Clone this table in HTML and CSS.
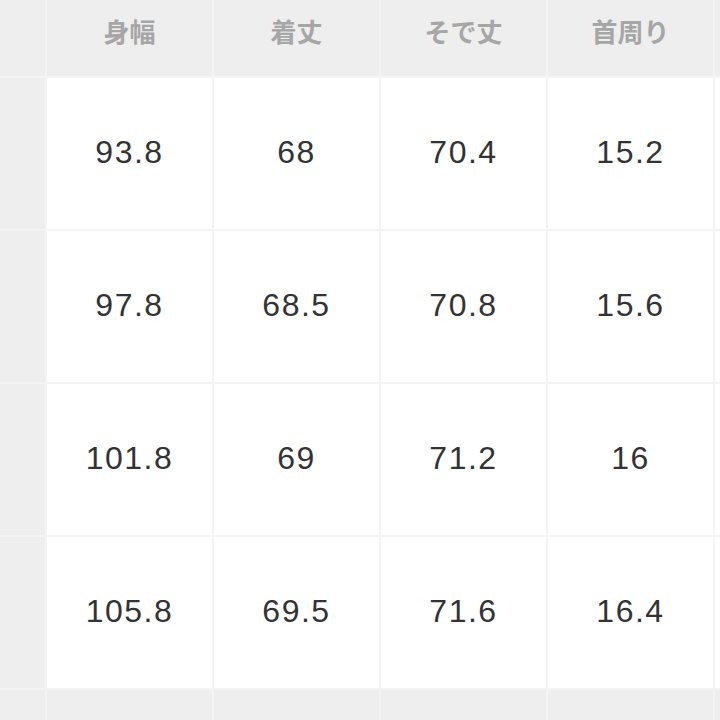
FILE: index.html
```html
<!DOCTYPE html>
<html lang="ja">
<head>
<meta charset="utf-8">
<link rel="stylesheet" href="styles.css">
</head>
<body>
<div class="table">
  <div class="cell side"></div>
  <div class="cell head">身幅</div>
  <div class="cell head">着丈</div>
  <div class="cell head">そで丈</div>
  <div class="cell head">首周り</div>
  <div class="cell head"></div>

  <div class="cell side"></div>
  <div class="cell val">93.8</div>
  <div class="cell val">68</div>
  <div class="cell val">70.4</div>
  <div class="cell val">15.2</div>
  <div class="cell val"></div>

  <div class="cell side"></div>
  <div class="cell val">97.8</div>
  <div class="cell val">68.5</div>
  <div class="cell val">70.8</div>
  <div class="cell val">15.6</div>
  <div class="cell val"></div>

  <div class="cell side"></div>
  <div class="cell val">101.8</div>
  <div class="cell val">69</div>
  <div class="cell val">71.2</div>
  <div class="cell val">16</div>
  <div class="cell val"></div>

  <div class="cell side"></div>
  <div class="cell val">105.8</div>
  <div class="cell val">69.5</div>
  <div class="cell val">71.6</div>
  <div class="cell val">16.4</div>
  <div class="cell val"></div>

  <div class="cell side"></div>
  <div class="cell head"></div>
  <div class="cell head"></div>
  <div class="cell head"></div>
  <div class="cell head"></div>
  <div class="cell head"></div>
</div>
</body>
</html>
```
FILE: styles.css
```css
html, body {
  margin: 0;
  padding: 0;
  width: 720px;
  height: 720px;
  overflow: hidden;
  background: #f4f4f4;
}
.table {
  display: grid;
  grid-template-columns: 45px 165px 165px 165px 165px 5px;
  grid-template-rows: 76px 151px 151px 151px 151px 30px;
  gap: 2px;
  background: #f4f4f4;
  width: max-content;
}
.cell {
  display: flex;
  align-items: center;
  justify-content: center;
}
.side {
  background: #eeeeee;
}
.head {
  background: #eeeeee;
  color: #a6a6a6;
  font-family: "Noto Sans CJK JP", sans-serif;
  font-weight: 700;
  font-size: 26px;
  padding-bottom: 15px;
  box-sizing: border-box;
}
.val {
  background: #ffffff;
  color: #333333;
  font-family: "Liberation Sans", Arial, sans-serif;
  font-weight: 400;
  font-size: 32px;
  letter-spacing: 1.5px;
  padding-bottom: 2px;
  box-sizing: border-box;
}
```
